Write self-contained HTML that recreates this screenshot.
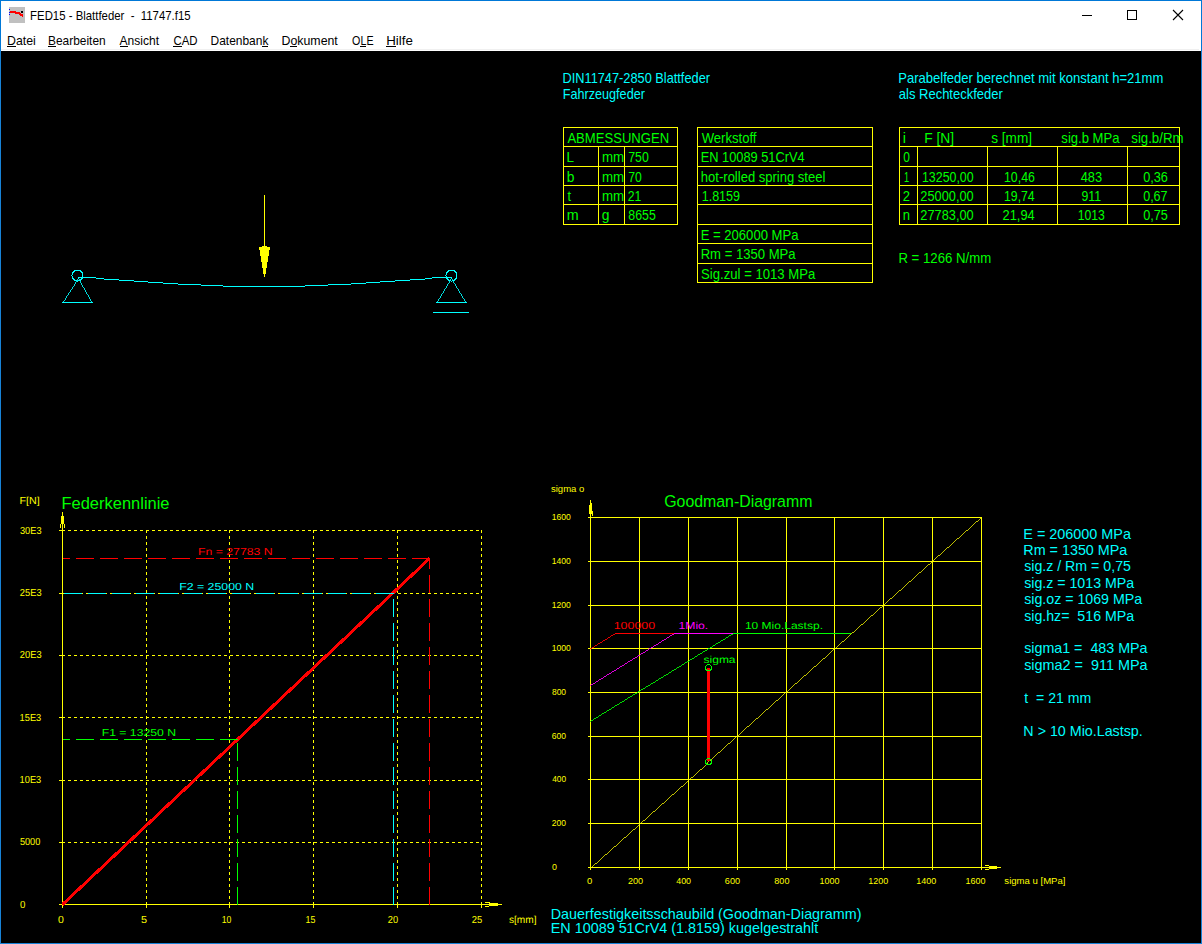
<!DOCTYPE html>
<html lang="de"><head><meta charset="utf-8"><title>FED15 - Blattfeder - 11747.f15</title>
<style>html,body{margin:0;padding:0;background:#000;overflow:hidden}svg{display:block}text{font-family:"Liberation Sans",Arial,sans-serif;white-space:pre}.gp{text-rendering:geometricPrecision}.c{shape-rendering:crispEdges;fill:none;stroke-width:1}</style></head><body>
<svg width="1202" height="944" viewBox="0 0 1202 944">
<rect x="0" y="0" width="1202" height="944" fill="#000"/>
<rect x="0" y="0" width="1202" height="51" fill="#fff"/>
<rect x="1" y="49" width="1198" height="1" fill="#f0f0f0"/>
<g shape-rendering="crispEdges"><rect x="0" y="0" width="1202" height="1" fill="#0078d7"/><rect x="0" y="0" width="1" height="51" fill="#0078d7"/><rect x="1201" y="0" width="1" height="51" fill="#0078d7"/><rect x="0" y="51" width="1" height="893" fill="#1883d7"/><rect x="1201" y="51" width="1" height="893" fill="#1883d7"/><rect x="0" y="943" width="1202" height="1" fill="#1883d7"/></g>
<g shape-rendering="crispEdges"><rect x="9" y="7" width="16" height="16" fill="#c0c0c0"/>
<rect x="10" y="11" width="6" height="1" fill="#f00"/>
<rect x="10" y="12" width="10" height="1" fill="#f00"/>
<rect x="15" y="13" width="6" height="1" fill="#f00"/>
<rect x="19" y="14" width="4" height="1" fill="#f00"/>
<rect x="20" y="15" width="3" height="1" fill="#f00"/>
<rect x="22" y="16" width="1" height="1" fill="#f00"/>
<rect x="9" y="9" width="1" height="1" fill="#00f"/>
<rect x="9" y="12" width="1" height="1" fill="#00f"/>
<rect x="9" y="14" width="1" height="1" fill="#00f"/>
<rect x="21" y="11" width="2" height="2" fill="#000"/></g>
<g class="c" stroke="#000"><path d="M1082 15.5h10"/><rect x="1127.5" y="10.5" width="9" height="9"/></g>
<path d="M1173 10l10 10M1183 10l-10 10" stroke="#000" stroke-width="1.1" fill="none"/>
<!--UL-->
<g class="c" stroke="#00ffff">
<circle cx="77.5" cy="275.5" r="5.5"/><circle cx="451.5" cy="275.5" r="5.5"/>
<path style="stroke-width:.86" d="M62.5 302.5L78.5 277.5L92.5 302.5M436.5 302.5L451.5 277.5L466.5 302.5"/><path d="M62 302.5H93M436 302.5H467M433 312.5H469"/>
<path d="M78 277.5H96M96 278.5H104M104 279.5H119M119 280.5H134M134 281.5H148M148 282.5H163M163 283.5H178M178 284.5H201M201 285.5H223M223 286.5H305M305 285.5H328M328 284.5H351M351 283.5H366M366 282.5H380M380 281.5H395M395 280.5H410M410 279.5H425M425 278.5H432M432 277.5H452"/>
</g>
<g shape-rendering="crispEdges" fill="#ffff00"><rect x="264" y="195" width="1" height="82"/>
<rect x="262" y="246" width="5" height="1"/>
<rect x="259" y="247" width="11" height="3"/>
<rect x="260" y="250" width="9" height="6"/>
<rect x="261" y="256" width="7" height="6"/>
<rect x="262" y="262" width="5" height="6"/>
<rect x="263" y="268" width="3" height="6"/>
</g>
<path class="c" stroke="#ffff00" d="M563 127.5H678M563 146.5H678M563 166.5H678M563 185.5H678M563 204.5H678M563 224.5H678M563.5 127V225M677.5 127V225M598.5 146V225M624.5 146V225M697 127.5H873M697 146.5H873M697 166.5H873M697 185.5H873M697 204.5H873M697 224.5H873M697 243.5H873M697 263.5H873M697 282.5H873M697.5 127V283M872.5 127V283M899 127.5H1180M899 146.5H1180M899 166.5H1180M899 185.5H1180M899 204.5H1180M899 224.5H1180M899.5 127V225M1179.5 127V225M917.5 146V225M987.5 146V225M1057.5 146V225M1127.5 146V225"/>
<path class="c" stroke="#ffff00" stroke-dasharray="3 3" d="M62 530.5H482M62 593.5H482M62 655.5H482M62 717.5H482M62 780.5H482M62 842.5H482M146.5 530V904M229.5 530V904M313.5 530V904M397.5 530V904M481.5 530V904"/>
<path class="c" stroke="#ffff00" d="M62.5 512V908M59 904.5H502M59 530.5H62M59 593.5H62M59 655.5H62M59 717.5H62M59 780.5H62M59 842.5H62M146.5 905V908M229.5 905V908M313.5 905V908M397.5 905V908M481.5 905V908"/>
<g shape-rendering="crispEdges" fill="#ffff00"><rect x="61" y="516" width="3" height="8"/><rect x="60" y="524" width="1" height="4"/><rect x="64" y="524" width="1" height="4"/>
<rect x="489" y="903" width="9" height="3"/><rect x="485" y="902" width="5" height="1"/><rect x="485" y="906" width="4" height="1"/></g>
<path d="M62.5 904.5L429.5 558.5" stroke="#ff0000" stroke-width="3" fill="none" shape-rendering="crispEdges"/>
<path class="c" stroke="#ff0000" stroke-dasharray="18 6" d="M430 558.5H63M429.5 905V558"/>
<path class="c" stroke="#00ffff" stroke-dasharray="18 6" d="M394 593.5H63M393.5 905V593"/>
<path class="c" stroke="#00ff00" stroke-dasharray="18 6" d="M238 739.5H63M237.5 905V739"/>
<path class="c" stroke="#ffff00" d="M588 517.5H982M588 561.5H982M588 605.5H982M588 648.5H982M588 692.5H982M588 736.5H982M588 779.5H982M588 823.5H982M588 867.5H982M590.5 517V870M639.5 517V870M688.5 517V870M737.5 517V870M786.5 517V870M834.5 517V870M883.5 517V870M932.5 517V870M981.5 517V870M590.5 500V517M982 867.5H1001"/>
<g shape-rendering="crispEdges" fill="#ffff00"><rect x="589" y="505" width="3" height="9"/><rect x="590" y="503" width="2" height="2"/><rect x="592" y="511" width="1" height="5"/>
<rect x="989" y="866" width="8" height="3"/><rect x="985" y="865" width="4" height="1"/><rect x="985" y="869" width="4" height="1"/></g>
<path class="c" stroke="#ff0000" style="stroke-width:.86" d="M589.9 649.3L615.5 633.5"/><path class="c" stroke="#ff0000" d="M615 633.5H674.5"/>
<path class="c" stroke="#ff00ff" style="stroke-width:.86" d="M589.9 685.9L674.5 633.5"/><path class="c" stroke="#ff00ff" d="M674 633.5H733.5"/>
<path class="c" stroke="#00ff00" style="stroke-width:.86" d="M589.9 721.7L733.5 633.5"/><path class="c" stroke="#00ff00" d="M733 633.5H851"/>
<path class="c" stroke="#ffff00" style="stroke-width:.75" d="M590.5 867.5L981.5 517.5"/>
<rect x="707" y="668" width="3" height="93" fill="#ff0000" shape-rendering="crispEdges"/>
<g class="c" stroke="#00ff00"><circle cx="708.5" cy="667.5" r="3"/><circle cx="708.5" cy="761.5" r="3"/></g>
<text transform="translate(562.48 83.00) scale(0.8878 1)" font-size="14.4" fill="#00ffff">DIN11747-2850 Blattfeder</text>
<text transform="translate(562.79 99.00) scale(0.8774 1)" font-size="14.4" fill="#00ffff">Fahrzeugfeder</text>
<text transform="translate(898.26 83.00) scale(0.9064 1)" font-size="14.4" fill="#00ffff">Parabelfeder berechnet mit konstant h=21mm</text>
<text transform="translate(898.78 99.00) scale(0.9031 1)" font-size="14.4" fill="#00ffff">als Rechteckfeder</text>
<text transform="translate(898.44 263.00) scale(0.9165 1)" font-size="14.4" fill="#00ff00">R = 1266 N/mm</text>
<text transform="translate(567.40 143.00) scale(0.9088 1)" font-size="14.4" fill="#00ff00">ABMESSUNGEN</text>
<text transform="translate(566.62 162.00) scale(0.9363 1)" font-size="14.4" fill="#00ff00">L</text>
<text transform="translate(566.87 182.00) scale(0.9615 1)" font-size="14.4" fill="#00ff00">b</text>
<text transform="translate(567.51 201.00) scale(0.8814 1)" font-size="14.4" fill="#00ff00">t</text>
<text transform="translate(566.77 220.00) scale(0.9949 1)" font-size="14.4" fill="#00ff00">m</text>
<text transform="translate(602.03 162.00) scale(0.9256 1)" font-size="14.4" fill="#00ff00">mm</text>
<text transform="translate(602.03 182.00) scale(0.9256 1)" font-size="14.4" fill="#00ff00">mm</text>
<text transform="translate(602.03 201.00) scale(0.9256 1)" font-size="14.4" fill="#00ff00">mm</text>
<text transform="translate(601.75 220.00) scale(0.9615 1)" font-size="14.4" fill="#00ff00">g</text>
<text transform="translate(628.18 162.00) scale(0.8558 1)" font-size="14.4" fill="#00ff00">750</text>
<text transform="translate(628.19 182.00) scale(0.8459 1)" font-size="14.4" fill="#00ff00">70</text>
<text transform="translate(627.69 201.00) scale(0.8474 1)" font-size="14.4" fill="#00ff00">21</text>
<text transform="translate(628.31 220.00) scale(0.8586 1)" font-size="14.4" fill="#00ff00">8655</text>
<text transform="translate(701.70 143.00) scale(0.9102 1)" font-size="14.4" fill="#00ff00">Werkstoff</text>
<text transform="translate(700.67 162.00) scale(0.8904 1)" font-size="14.4" fill="#00ff00">EN 10089 51CrV4</text>
<text transform="translate(700.85 182.00) scale(0.9055 1)" font-size="14.4" fill="#00ff00">hot-rolled spring steel</text>
<text transform="translate(701.66 201.00) scale(0.8724 1)" font-size="14.4" fill="#00ff00">1.8159</text>
<text transform="translate(700.65 240.00) scale(0.9092 1)" font-size="14.4" fill="#00ff00">E = 206000 MPa</text>
<text transform="translate(700.65 259.00) scale(0.9095 1)" font-size="14.4" fill="#00ff00">Rm = 1350 MPa</text>
<text transform="translate(701.11 279.00) scale(0.9127 1)" font-size="14.4" fill="#00ff00">Sig.zul = 1013 MPa</text>
<text transform="translate(902.66 143.00) scale(1.0031 1)" font-size="14.4" fill="#00ff00">i</text>
<text transform="translate(924.19 143.00) scale(0.9598 1)" font-size="14.4" fill="#00ff00">F [N]</text>
<text transform="translate(991.26 143.00) scale(0.9437 1)" font-size="14.4" fill="#00ff00">s [mm]</text>
<text transform="translate(1061.37 143.00) scale(0.9071 1)" font-size="14.4" fill="#00ff00">sig.b MPa</text>
<text transform="translate(1131.27 143.00) scale(0.9200 1)" font-size="14.4" fill="#00ff00">sig.b/Rm</text>
<text transform="translate(903.28 162.00) scale(0.8305 1)" font-size="14.4" fill="#00ff00">0</text>
<text transform="translate(903.91 182.00) scale(0.6386 1)" font-size="14.4" fill="#00ff00">1</text>
<text transform="translate(902.65 201.00) scale(0.9058 1)" font-size="14.4" fill="#00ff00">2</text>
<text transform="translate(902.85 220.00) scale(0.9044 1)" font-size="14.4" fill="#00ff00">n</text>
<text transform="translate(921.97 182.00) scale(0.8604 1)" font-size="14.4" fill="#00ff00">13250,00</text>
<text transform="translate(920.36 201.00) scale(0.8874 1)" font-size="14.4" fill="#00ff00">25000,00</text>
<text transform="translate(920.36 220.00) scale(0.8874 1)" font-size="14.4" fill="#00ff00">27783,00</text>
<text transform="translate(1003.97 182.00) scale(0.8585 1)" font-size="14.4" fill="#00ff00">10,46</text>
<text transform="translate(1003.98 201.00) scale(0.8531 1)" font-size="14.4" fill="#00ff00">19,74</text>
<text transform="translate(1002.56 220.00) scale(0.8930 1)" font-size="14.4" fill="#00ff00">21,94</text>
<text transform="translate(1080.64 182.00) scale(0.8900 1)" font-size="14.4" fill="#00ff00">483</text>
<text transform="translate(1081.45 201.00) scale(0.8547 1)" font-size="14.4" fill="#00ff00">911</text>
<text transform="translate(1077.69 220.00) scale(0.8465 1)" font-size="14.4" fill="#00ff00">1013</text>
<text transform="translate(1143.15 182.00) scale(0.8838 1)" font-size="14.4" fill="#00ff00">0,36</text>
<text transform="translate(1143.16 201.00) scale(0.8712 1)" font-size="14.4" fill="#00ff00">0,67</text>
<text transform="translate(1143.15 220.00) scale(0.8838 1)" font-size="14.4" fill="#00ff00">0,75</text>
<text transform="translate(1023.35 539.00) scale(1.0002 1)" font-size="14.4" fill="#00ffff">E = 206000 MPa</text>
<text transform="translate(1023.35 555.00) scale(0.9956 1)" font-size="14.4" fill="#00ffff">Rm = 1350 MPa</text>
<text transform="translate(1024.15 571.00) scale(0.9852 1)" font-size="14.4" fill="#00ffff">sig.z / Rm = 0,75</text>
<text transform="translate(1024.15 588.00) scale(0.9860 1)" font-size="14.4" fill="#00ffff">sig.z = 1013 MPa</text>
<text transform="translate(1024.14 604.00) scale(0.9869 1)" font-size="14.4" fill="#00ffff">sig.oz = 1069 MPa</text>
<text transform="translate(1024.15 621.00) scale(0.9860 1)" font-size="14.4" fill="#00ffff">sig.hz=  516 MPa</text>
<text transform="translate(1024.14 653.00) scale(0.9922 1)" font-size="14.4" fill="#00ffff">sigma1 =  483 MPa</text>
<text transform="translate(1024.14 670.00) scale(1.0009 1)" font-size="14.4" fill="#00ffff">sigma2 =  911 MPa</text>
<text transform="translate(1024.29 703.00) scale(0.9792 1)" font-size="14.4" fill="#00ffff">t  = 21 mm</text>
<text transform="translate(1023.36 736.00) scale(0.9920 1)" font-size="14.4" fill="#00ffff">N &gt; 10 Mio.Lastsp.</text>
<text transform="translate(550.75 919.00) scale(0.9967 1)" font-size="14.4" fill="#00ffff">Dauerfestigkeitsschaubild (Goodman-Diagramm)</text>
<text transform="translate(550.75 933.00) scale(0.9986 1)" font-size="14.4" fill="#00ffff">EN 10089 51CrV4 (1.8159) kugelgestrahlt</text>
<text transform="translate(61.48 509.00) scale(1.0119 1)" font-size="16.3" fill="#00ff00">Federkennlinie</text>
<text transform="translate(664.21 507.00) scale(0.9744 1)" font-size="16.3" fill="#00ff00">Goodman-Diagramm</text>
<text class="gp" transform="translate(19.54 504.00) scale(1.0531 1)" font-size="10.2" fill="#ffff00">F[N]</text>
<text class="gp" transform="translate(19.98 534.00) scale(0.9069 1)" font-size="10.2" fill="#ffff00">30E3</text>
<text class="gp" transform="translate(19.83 596.00) scale(0.9130 1)" font-size="10.2" fill="#ffff00">25E3</text>
<text class="gp" transform="translate(19.83 658.00) scale(0.9130 1)" font-size="10.2" fill="#ffff00">20E3</text>
<text class="gp" transform="translate(19.60 721.00) scale(0.9100 1)" font-size="10.2" fill="#ffff00">15E3</text>
<text class="gp" transform="translate(19.60 783.00) scale(0.9100 1)" font-size="10.2" fill="#ffff00">10E3</text>
<text class="gp" transform="translate(19.93 845.00) scale(0.8990 1)" font-size="10.2" fill="#ffff00">5000</text>
<text class="gp" transform="translate(19.96 908.00) scale(0.9501 1)" font-size="10.2" fill="#ffff00">0</text>
<text class="gp" transform="translate(57.93 923.00) scale(1.0309 1)" font-size="10.2" fill="#ffff00">0</text>
<text class="gp" transform="translate(141.06 923.00) scale(1.0733 1)" font-size="10.2" fill="#ffff00">5</text>
<text class="gp" transform="translate(221.75 923.00) scale(0.8520 1)" font-size="10.2" fill="#ffff00">10</text>
<text class="gp" transform="translate(305.54 923.00) scale(0.8661 1)" font-size="10.2" fill="#ffff00">15</text>
<text class="gp" transform="translate(387.84 923.00) scale(0.9076 1)" font-size="10.2" fill="#ffff00">20</text>
<text class="gp" transform="translate(471.73 923.00) scale(0.9217 1)" font-size="10.2" fill="#ffff00">25</text>
<text class="gp" transform="translate(508.95 923.00) scale(0.9920 1)" font-size="10.2" fill="#ffff00">s[mm]</text>
<text transform="translate(550.96 492.00) scale(1.0378 1)" font-size="9.200000000000001" fill="#ffff00">sigma o</text>
<text transform="translate(551.65 520.00) scale(0.9786 1)" font-size="8.8" fill="#ffff00">1600</text>
<text transform="translate(551.65 564.00) scale(0.9786 1)" font-size="8.8" fill="#ffff00">1400</text>
<text transform="translate(551.65 608.00) scale(0.9786 1)" font-size="8.8" fill="#ffff00">1200</text>
<text transform="translate(551.65 651.00) scale(0.9786 1)" font-size="8.8" fill="#ffff00">1000</text>
<text transform="translate(551.96 695.00) scale(0.9634 1)" font-size="8.8" fill="#ffff00">800</text>
<text transform="translate(551.87 739.00) scale(0.9695 1)" font-size="8.8" fill="#ffff00">600</text>
<text transform="translate(552.13 782.00) scale(0.9515 1)" font-size="8.8" fill="#ffff00">400</text>
<text transform="translate(551.87 826.00) scale(0.9695 1)" font-size="8.8" fill="#ffff00">200</text>
<text transform="translate(551.99 870.00) scale(1.0075 1)" font-size="8.8" fill="#ffff00">0</text>
<text transform="translate(586.97 884.00) scale(1.0778 1)" font-size="8.8" fill="#ffff00">0</text>
<text transform="translate(627.99 884.00) scale(1.0342 1)" font-size="8.8" fill="#ffff00">200</text>
<text transform="translate(676.17 884.00) scale(1.0149 1)" font-size="8.8" fill="#ffff00">400</text>
<text transform="translate(724.84 884.00) scale(1.0342 1)" font-size="8.8" fill="#ffff00">600</text>
<text transform="translate(774.34 884.00) scale(1.0277 1)" font-size="8.8" fill="#ffff00">800</text>
<text transform="translate(819.53 884.00) scale(1.0216 1)" font-size="8.8" fill="#ffff00">1000</text>
<text transform="translate(868.33 884.00) scale(1.0216 1)" font-size="8.8" fill="#ffff00">1200</text>
<text transform="translate(916.23 884.00) scale(1.0216 1)" font-size="8.8" fill="#ffff00">1400</text>
<text transform="translate(965.43 884.00) scale(1.0216 1)" font-size="8.8" fill="#ffff00">1600</text>
<text transform="translate(1004.36 884.00) scale(1.0407 1)" font-size="9.200000000000001" fill="#ffff00">sigma u [MPa]</text>
<text class="gp" transform="translate(198.02 555.00) scale(1.2019 1)" font-size="10.2" fill="#ff0000">Fn = 27783 N</text>
<text class="gp" transform="translate(179.21 590.00) scale(1.2085 1)" font-size="10.2" fill="#00ffff">F2 = 25000 N</text>
<text class="gp" transform="translate(101.72 736.00) scale(1.1969 1)" font-size="10.2" fill="#00ff00">F1 = 13250 N</text>
<text class="gp" transform="translate(613.67 629.00) scale(1.2187 1)" font-size="10.2" fill="#ff0000">100000</text>
<text class="gp" transform="translate(678.49 629.00) scale(1.1941 1)" font-size="10.2" fill="#ff00ff">1Mio.</text>
<text class="gp" transform="translate(744.90 629.00) scale(1.1782 1)" font-size="10.2" fill="#00ff00">10 Mio.Lastsp.</text>
<text class="gp" transform="translate(703.60 663.00) scale(1.1744 1)" font-size="10.2" fill="#00ff00">sigma</text>
<text transform="translate(30.09 20.00) scale(0.9496 1)" font-size="12" fill="#000000">FED15 - Blattfeder  -  11747.f15</text>
<text transform="translate(7.01 45.00) scale(1.0287 1)" font-size="12" fill="#000000">Datei</text>
<text transform="translate(48.05 45.00) scale(0.9938 1)" font-size="12" fill="#000000">Bearbeiten</text>
<text transform="translate(119.50 45.00) scale(1.0046 1)" font-size="12" fill="#000000">Ansicht</text>
<text transform="translate(173.43 45.00) scale(0.9516 1)" font-size="12" fill="#000000">CAD</text>
<text transform="translate(210.54 45.00) scale(0.9975 1)" font-size="12" fill="#000000">Datenbank</text>
<text transform="translate(281.51 45.00) scale(1.0298 1)" font-size="12" fill="#000000">Dokument</text>
<text transform="translate(352.12 45.00) scale(0.8926 1)" font-size="12" fill="#000000">OLE</text>
<text transform="translate(386.23 45.00) scale(1.1130 1)" font-size="12" fill="#000000">Hilfe</text>
<path class="c" stroke="#000" d="M7 46.5H16M48 46.5H56M120 46.5H128M173 46.5H182M262 46.5H268M290 46.5H297M360 46.5H366M386 46.5H396"/>
</svg></body></html>
